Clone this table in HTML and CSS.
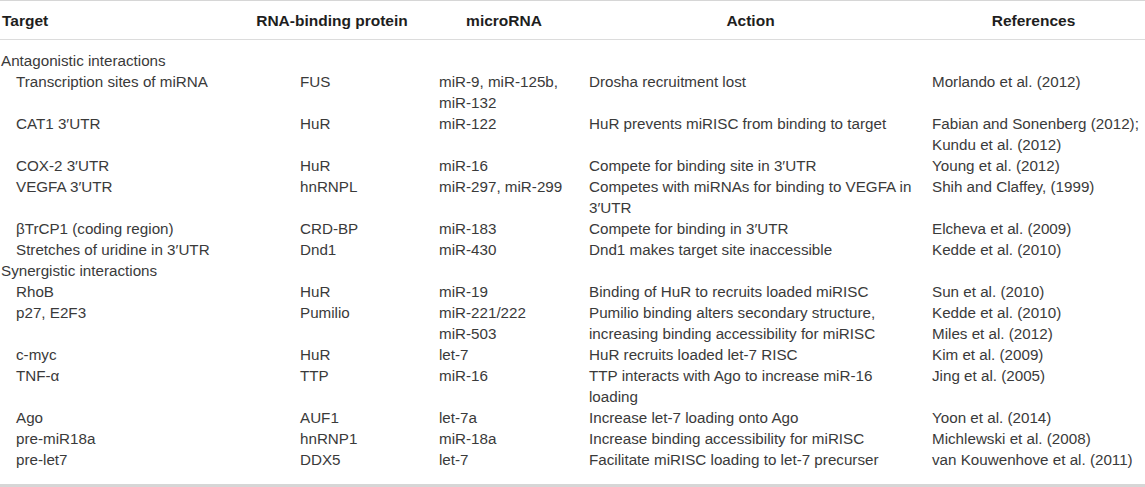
FILE: index.html
```html
<!DOCTYPE html>
<html>
<head>
<meta charset="utf-8">
<link rel="stylesheet" href="styles.css">
</head>
<body>
<table class="tbl">
  <colgroup>
    <col class="c1"><col class="c2"><col class="c3"><col class="c4"><col class="c5">
  </colgroup>
  <thead>
    <tr>
      <th class="h-target">Target</th>
      <th>RNA-binding protein</th>
      <th>microRNA</th>
      <th>Action</th>
      <th>References</th>
    </tr>
  </thead>
  <tbody>
    <tr class="group first"><td colspan="5">Antagonistic interactions</td></tr>
    <tr><td>Transcription sites of miRNA</td><td class="rbp">FUS</td><td>miR-9, miR-125b,<br>miR-132</td><td>Drosha recruitment lost</td><td>Morlando et al. (2012)</td></tr>
    <tr><td>CAT1 3′UTR</td><td class="rbp">HuR</td><td>miR-122</td><td>HuR prevents miRISC from binding to target</td><td>Fabian and Sonenberg (2012);<br>Kundu et al. (2012)</td></tr>
    <tr><td>COX-2 3′UTR</td><td class="rbp">HuR</td><td>miR-16</td><td>Compete for binding site in 3′UTR</td><td>Young et al. (2012)</td></tr>
    <tr><td>VEGFA 3′UTR</td><td class="rbp">hnRNPL</td><td>miR-297, miR-299</td><td>Competes with miRNAs for binding to VEGFA in<br>3′UTR</td><td>Shih and Claffey, (1999)</td></tr>
    <tr><td>βTrCP1 (coding region)</td><td class="rbp">CRD-BP</td><td>miR-183</td><td>Compete for binding in 3′UTR</td><td>Elcheva et al. (2009)</td></tr>
    <tr><td>Stretches of uridine in 3′UTR</td><td class="rbp">Dnd1</td><td>miR-430</td><td>Dnd1 makes target site inaccessible</td><td>Kedde et al. (2010)</td></tr>
    <tr class="group"><td colspan="5">Synergistic interactions</td></tr>
    <tr><td>RhoB</td><td class="rbp">HuR</td><td>miR-19</td><td>Binding of HuR to recruits loaded miRISC</td><td>Sun et al. (2010)</td></tr>
    <tr><td>p27, E2F3</td><td class="rbp">Pumilio</td><td>miR-221/222<br>miR-503</td><td>Pumilio binding alters secondary structure,<br>increasing binding accessibility for miRISC</td><td>Kedde et al. (2010)<br>Miles et al. (2012)</td></tr>
    <tr><td>c-myc</td><td class="rbp">HuR</td><td>let-7</td><td>HuR recruits loaded let-7 RISC</td><td>Kim et al. (2009)</td></tr>
    <tr><td>TNF-α</td><td class="rbp">TTP</td><td>miR-16</td><td>TTP interacts with Ago to increase miR-16<br>loading</td><td>Jing et al. (2005)</td></tr>
    <tr><td>Ago</td><td class="rbp">AUF1</td><td>let-7a</td><td>Increase let-7 loading onto Ago</td><td>Yoon et al. (2014)</td></tr>
    <tr><td>pre-miR18a</td><td class="rbp">hnRNP1</td><td>miR-18a</td><td>Increase binding accessibility for miRISC</td><td>Michlewski et al. (2008)</td></tr>
    <tr class="last"><td>pre-let7</td><td class="rbp">DDX5</td><td>let-7</td><td>Facilitate miRISC loading to let-7 precurser</td><td>van Kouwenhove et al. (2011)</td></tr>
  </tbody>
</table>
</body>
</html>
```

FILE: styles.css
```css
html, body {
  margin: 0;
  padding: 0;
  background: #ffffff;
}

.tbl {
  width: 1145px;
  table-layout: fixed;
  border-collapse: collapse;
  font-family: "Liberation Sans", Arial, Helvetica, sans-serif;
  font-size: 15.2px;
  line-height: 21px;
  color: #3a3a3a;
  border-top: 1px solid #d6d6d6;
  border-bottom: 3px solid #d6d6d6;
}

.c1 { width: 235px; }
.c2 { width: 194px; }
.c3 { width: 150px; }
.c4 { width: 343px; }
.c5 { width: 223px; }

.tbl th {
  font-size: 15.5px;
  font-weight: bold;
  color: #1e1e1e;
  text-align: center;
  padding: 9px 10px 8px 10px;
  border-bottom: 1px solid #dcdcdc;
  white-space: nowrap;
}

.tbl th.h-target {
  text-align: left;
  padding-left: 2px;
}

.tbl td {
  padding: 0 10px;
  vertical-align: top;
  white-space: nowrap;
}

.tbl td:first-child {
  padding-left: 16px;
}

.tbl td.rbp {
  padding-left: 65px;
}

.tbl tr.group td {
  padding-left: 1px;
}

.tbl tr.first td {
  padding-top: 10px;
}

.tbl tr.last td {
  padding-bottom: 14px;
}
```
